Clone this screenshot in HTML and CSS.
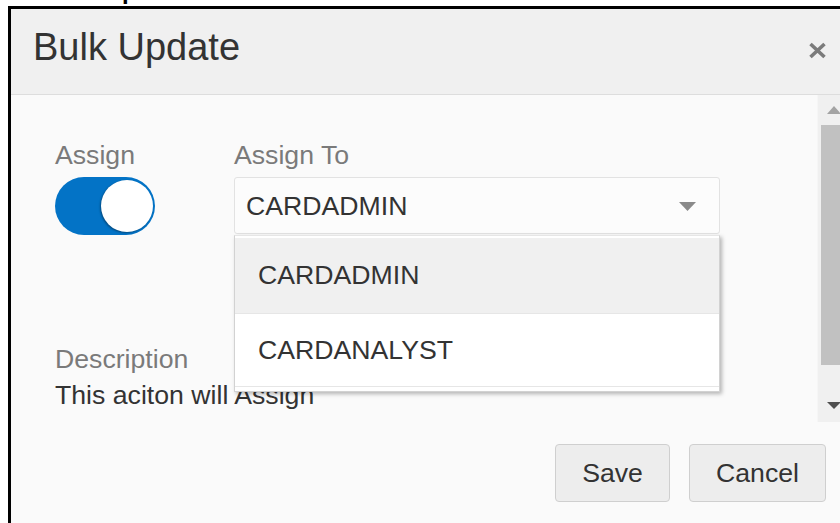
FILE: index.html
```html
<!DOCTYPE html>
<html lang="en">
<head>
<meta charset="utf-8">
<title>Bulk Update</title>
<link rel="stylesheet" href="styles.css">
</head>
<body>
  <div class="page-title"><span class="page-title-text">Bulk Update</span></div>

  <div class="dialog" role="dialog" aria-labelledby="dlg-title">
    <header class="dialog-header">
      <h2 class="dialog-title" id="dlg-title">Bulk Update</h2>
      <button class="dialog-close" aria-label="Close">
        <svg width="19" height="17" viewBox="0 0 19 17" aria-hidden="true">
          <path d="M2.5 2 L16.5 15 M16.5 2 L2.5 15" stroke="#7b7b7b" stroke-width="3.6" stroke-linecap="butt" fill="none"/>
        </svg>
      </button>
    </header>

    <div class="dialog-scroll">
      <div class="dialog-content">
        <div class="field-row">
          <div class="field field-toggle">
            <label class="field-label">Assign</label>
            <span class="switch switch-on"><span class="switch-knob"></span></span>
          </div>
          <div class="field field-select">
            <label class="field-label">Assign To</label>
            <div class="select">
              <span class="select-value">CARDADMIN</span>
              <svg class="select-caret" width="17" height="9" viewBox="0 0 17 9" aria-hidden="true">
                <path d="M0 0 H17 L8.5 9 Z" fill="#8a8a8a"/>
              </svg>
              <ul class="select-menu">
                <li class="select-option is-active">CARDADMIN</li>
                <li class="select-option">CARDANALYST</li>
              </ul>
            </div>
          </div>
        </div>

        <div class="field-desc">
          <div class="field-label">Description</div>
          <div class="desc-text">This aciton will Assign</div>
        </div>
      </div>

      <div class="scrollbar">
        <svg class="scroll-arrow scroll-up" width="14" height="8" viewBox="0 0 14 8" aria-hidden="true">
          <path d="M0 8 L7 0 L14 8 Z" fill="#a3a3a3"/>
        </svg>
        <div class="scroll-thumb"></div>
        <svg class="scroll-arrow scroll-down" width="14" height="7" viewBox="0 0 14 7" aria-hidden="true">
          <path d="M0 0 H14 L7 7 Z" fill="#505050"/>
        </svg>
      </div>
    </div>

    <footer class="dialog-footer">
      <button class="btn">Save</button>
      <button class="btn">Cancel</button>
    </footer>
  </div>
</body>
</html>
```

FILE: styles.css
```css
html, body {
  margin: 0;
  padding: 0;
  background: #ffffff;
  overflow: hidden;
  height: 100%;
}

body {
  font-family: "Liberation Sans", Arial, sans-serif;
  color: #333333;
}

/* page heading, scrolled mostly out of view */
.page-title {
  height: 6px;
  overflow: hidden;
  padding-left: 46px;
  font-weight: bold;
  font-size: 24px;
  line-height: 24px;
  color: #000;
}
.page-title-text {
  display: block;
  margin-top: -21px;
}

/* dialog frame */
.dialog {
  margin-left: 8px;
  width: 838px;
  height: 620px;
  border: 3px solid #000;
  background: #fafafa;
  display: flex;
  flex-direction: column;
}

.dialog-header {
  height: 86px;
  box-sizing: border-box;
  background: #f0f0f0;
  border-bottom: 1px solid #dddddd;
  padding: 16px 22px 0 22px;
  display: flex;
  justify-content: space-between;
  align-items: flex-start;
}

.dialog-title {
  margin: 0;
  font-weight: normal;
  font-size: 38px;
  line-height: 44px;
  color: #333333;
}

.dialog-close {
  margin-top: 17px;
  padding: 0;
  border: 0;
  background: none;
  width: 19px;
  height: 17px;
  display: block;
}
.dialog-close svg { display: block; }

/* scrollable body */
.dialog-scroll {
  height: 327px;
  display: flex;
  position: relative;
}

.dialog-content {
  flex: 1;
  padding: 44px 0 0 44px;
  font-size: 26.67px;
}

.field-row {
  display: flex;
}

.field-label {
  display: block;
  line-height: 32px;
  color: #7a7a7a;
}

.field-toggle {
  width: 179px;
}

.switch {
  display: block;
  margin-top: 6px;
  width: 100px;
  height: 58px;
  border-radius: 29px;
  background: #0373c6;
  position: relative;
}
.switch-knob {
  position: absolute;
  right: 2px;
  top: 3px;
  width: 52px;
  height: 52px;
  border-radius: 50%;
  background: #ffffff;
  box-shadow: -1px 1px 2px rgba(0, 0, 0, 0.35);
}

.select {
  margin-top: 6px;
  width: 486px;
  height: 57px;
  box-sizing: border-box;
  border: 1px solid #e2e2e2;
  border-radius: 3px;
  background: #fcfcfc;
  display: flex;
  align-items: center;
  justify-content: space-between;
  padding: 0 23px 0 11px;
  position: relative;
}
.select-value {
  color: #333333;
  line-height: 32px;
}
.select-caret { display: block; margin-top: 2px; }

/* open option list, overlays the content below */
.select-menu {
  position: absolute;
  left: -1px;
  top: 57px;
  width: 486px;
  box-sizing: border-box;
  margin: 0;
  padding: 2px 0 4px 0;
  list-style: none;
  background: #ffffff;
  border: 1px solid #d2d2d2;
  border-top-color: #e6e6e6;
  box-shadow: 2px 2px 4px rgba(0, 0, 0, 0.28);
  z-index: 2;
}
.select-option {
  display: flex;
  align-items: center;
  padding-left: 23px;
  height: 75px;
  border-bottom: 1px solid #e6e6e6;
  color: #333333;
}
.select-option.is-active {
  background: #f0f0f0;
}
.select-option + .select-option {
  height: 72px;
}

.field-desc {
  margin-top: 108px;
}
.desc-text {
  line-height: 32px;
  margin-top: 4px;
  color: #333333;
}

/* scrollbar */
.scrollbar {
  width: 32px;
  background: #f0f0f0;
  border-left: 1px solid #f6f6f6;
  display: flex;
  flex-direction: column;
  align-items: center;
  box-sizing: border-box;
}
.scroll-arrow { display: block; margin-left: 1px; }
.scroll-up { margin-top: 11px; }
.scroll-thumb {
  margin-top: 11px;
  width: 26px;
  height: 240px;
  background: #c1c1c1;
}
.scroll-down { margin-top: 37px; }

/* footer buttons */
.dialog-footer {
  padding: 22px 23px 0 0;
  display: flex;
  justify-content: flex-end;
  gap: 19px;
}

.btn {
  height: 58px;
  min-width: 115px;
  box-sizing: border-box;
  padding: 0 26px;
  border: 1px solid #cfcfcf;
  border-radius: 4px;
  background: #ededed;
  font-family: "Liberation Sans", Arial, sans-serif;
  font-size: 26.67px;
  color: #333333;
}
```
